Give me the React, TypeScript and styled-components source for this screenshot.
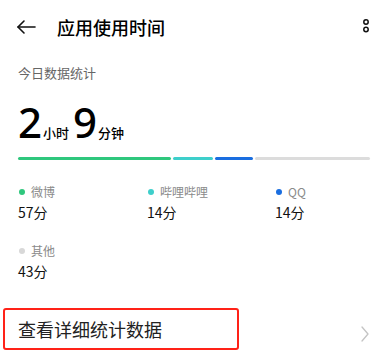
import React from "react";
import styled, { createGlobalStyle } from "styled-components";

const Global = createGlobalStyle`
  html, body { margin: 0; padding: 0; background: #fff; }
  body { font-family: "Noto Sans CJK SC", "Noto Sans", sans-serif; color: #000; }
`;

const Page = styled.div`
  width: 386px;
  height: 364px;
  overflow: hidden;
  position: relative;
  background: #fff;
`;

const Header = styled.div`
  height: 54px;
  display: flex;
  align-items: center;
  padding: 0 15px 0 16px;
`;

const Title = styled.div`
  font-size: 18px;
  font-weight: 500;
  margin-left: 21px;
  flex: 1;
  line-height: 1;
`;

const IconBtn = styled.div`
  display: flex;
  align-items: center;
  justify-content: center;
`;

const Section = styled.div`
  padding: 0 16px 0 18px;
`;

const Caption = styled.div`
  font-size: 13px;
  color: #666;
  line-height: 18px;
  margin-top: 10px;
`;

const Total = styled.div`
  display: flex;
  align-items: baseline;
  margin-top: 20px;
  height: 40px;
`;

const Big = styled.span`
  font-family: "Noto Sans", sans-serif;
  font-size: 42px;
  font-weight: 500;
  line-height: 40px;
  letter-spacing: -1px;
`;

const Unit = styled.span`
  font-size: 13px;
  font-weight: 500;
  margin: 0 4px 0 2px;
`;

const Bar = styled.div`
  display: flex;
  gap: 2px;
  margin-top: 15px;
  height: 3px;
`;

const Seg = styled.div<{ $c: string; $w: number }>`
  width: ${(p) => p.$w}px;
  flex: ${(p) => (p.$w ? "none" : "1")};
  background: ${(p) => p.$c};
  border-radius: 2px;
`;

const Legend = styled.div`
  display: grid;
  grid-template-columns: 129px 128px 1fr;
  row-gap: 21px;
  margin-top: 24px;
`;

const Item = styled.div`
  display: flex;
  flex-direction: column;
`;

const Label = styled.div`
  display: flex;
  align-items: center;
  font-size: 12px;
  color: #8a8a8a;
  line-height: 16px;
`;

const Dot = styled.span<{ $c: string }>`
  width: 6px;
  height: 6px;
  border-radius: 50%;
  background: ${(p) => p.$c};
  margin: 0 6px 0 1px;
`;

const Value = styled.div`
  font-size: 14px;
  line-height: 20px;
  margin-top: 2px;
  color: #111;
`;

const Footer = styled.div`
  position: relative;
  margin-top: 27px;
  height: 42px;
  display: flex;
  align-items: center;
  padding: 0 16px 0 18px;
  justify-content: space-between;
`;

const FooterText = styled.div`
  font-size: 18px;
  color: #222;
  line-height: 24px;
`;

const Chevron = styled.svg`
  margin-top: 10px;
`;

const Highlight = styled.div`
  position: absolute;
  left: 3px;
  top: 0px;
  width: 236px;
  height: 42px;
  box-sizing: border-box;
  border: 2.5px solid #ff2218;
  border-radius: 3px;
  pointer-events: none;
`;

const items = [
  { name: "微博", value: "57分", c: "#2fc77d" },
  { name: "哔哩哔哩", value: "14分", c: "#3ecfcb" },
  { name: "QQ", value: "14分", c: "#1a6ee0" },
  { name: "其他", value: "43分", c: "#d8d8d8" },
];

export default function App() {
  return (
    <Page>
      <Global />
      <Header>
        <IconBtn>
          <svg width="20" height="16" viewBox="0 0 20 16" fill="none" stroke="#111" strokeWidth="1.6" strokeLinecap="round" strokeLinejoin="round">
            <path d="M19 8H2" />
            <path d="M8 2L2 8l6 6" />
          </svg>
        </IconBtn>
        <Title>应用使用时间</Title>
        <IconBtn>
          <svg width="10" height="20" viewBox="0 0 10 20" fill="none" stroke="#111" strokeWidth="1.5">
            <circle cx="5" cy="5" r="2.2" />
            <circle cx="5" cy="12.5" r="2.2" />
          </svg>
        </IconBtn>
      </Header>
      <Section>
        <Caption>今日数据统计</Caption>
        <Total>
          <Big>2</Big>
          <Unit>小时</Unit>
          <Big>9</Big>
          <Unit>分钟</Unit>
        </Total>
        <Bar>
          <Seg $c="#2fc77d" $w={153} />
          <Seg $c="#3ecfcb" $w={40} />
          <Seg $c="#1a6ee0" $w={38} />
          <Seg $c="#dcdcdc" $w={0} />
        </Bar>
        <Legend>
          {items.map((it) => (
            <Item key={it.name}>
              <Label>
                <Dot $c={it.c} />
                {it.name}
              </Label>
              <Value>{it.value}</Value>
            </Item>
          ))}
        </Legend>
      </Section>
      <Footer>
        <Highlight />
        <FooterText>查看详细统计数据</FooterText>
        <Chevron width="10" height="18" viewBox="0 0 10 18" fill="none" stroke="#c4c4c4" strokeWidth="1.3" strokeLinecap="round" strokeLinejoin="round">
          <path d="M2 2l6 7-6 7" />
        </Chevron>
      </Footer>
    </Page>
  );
}
